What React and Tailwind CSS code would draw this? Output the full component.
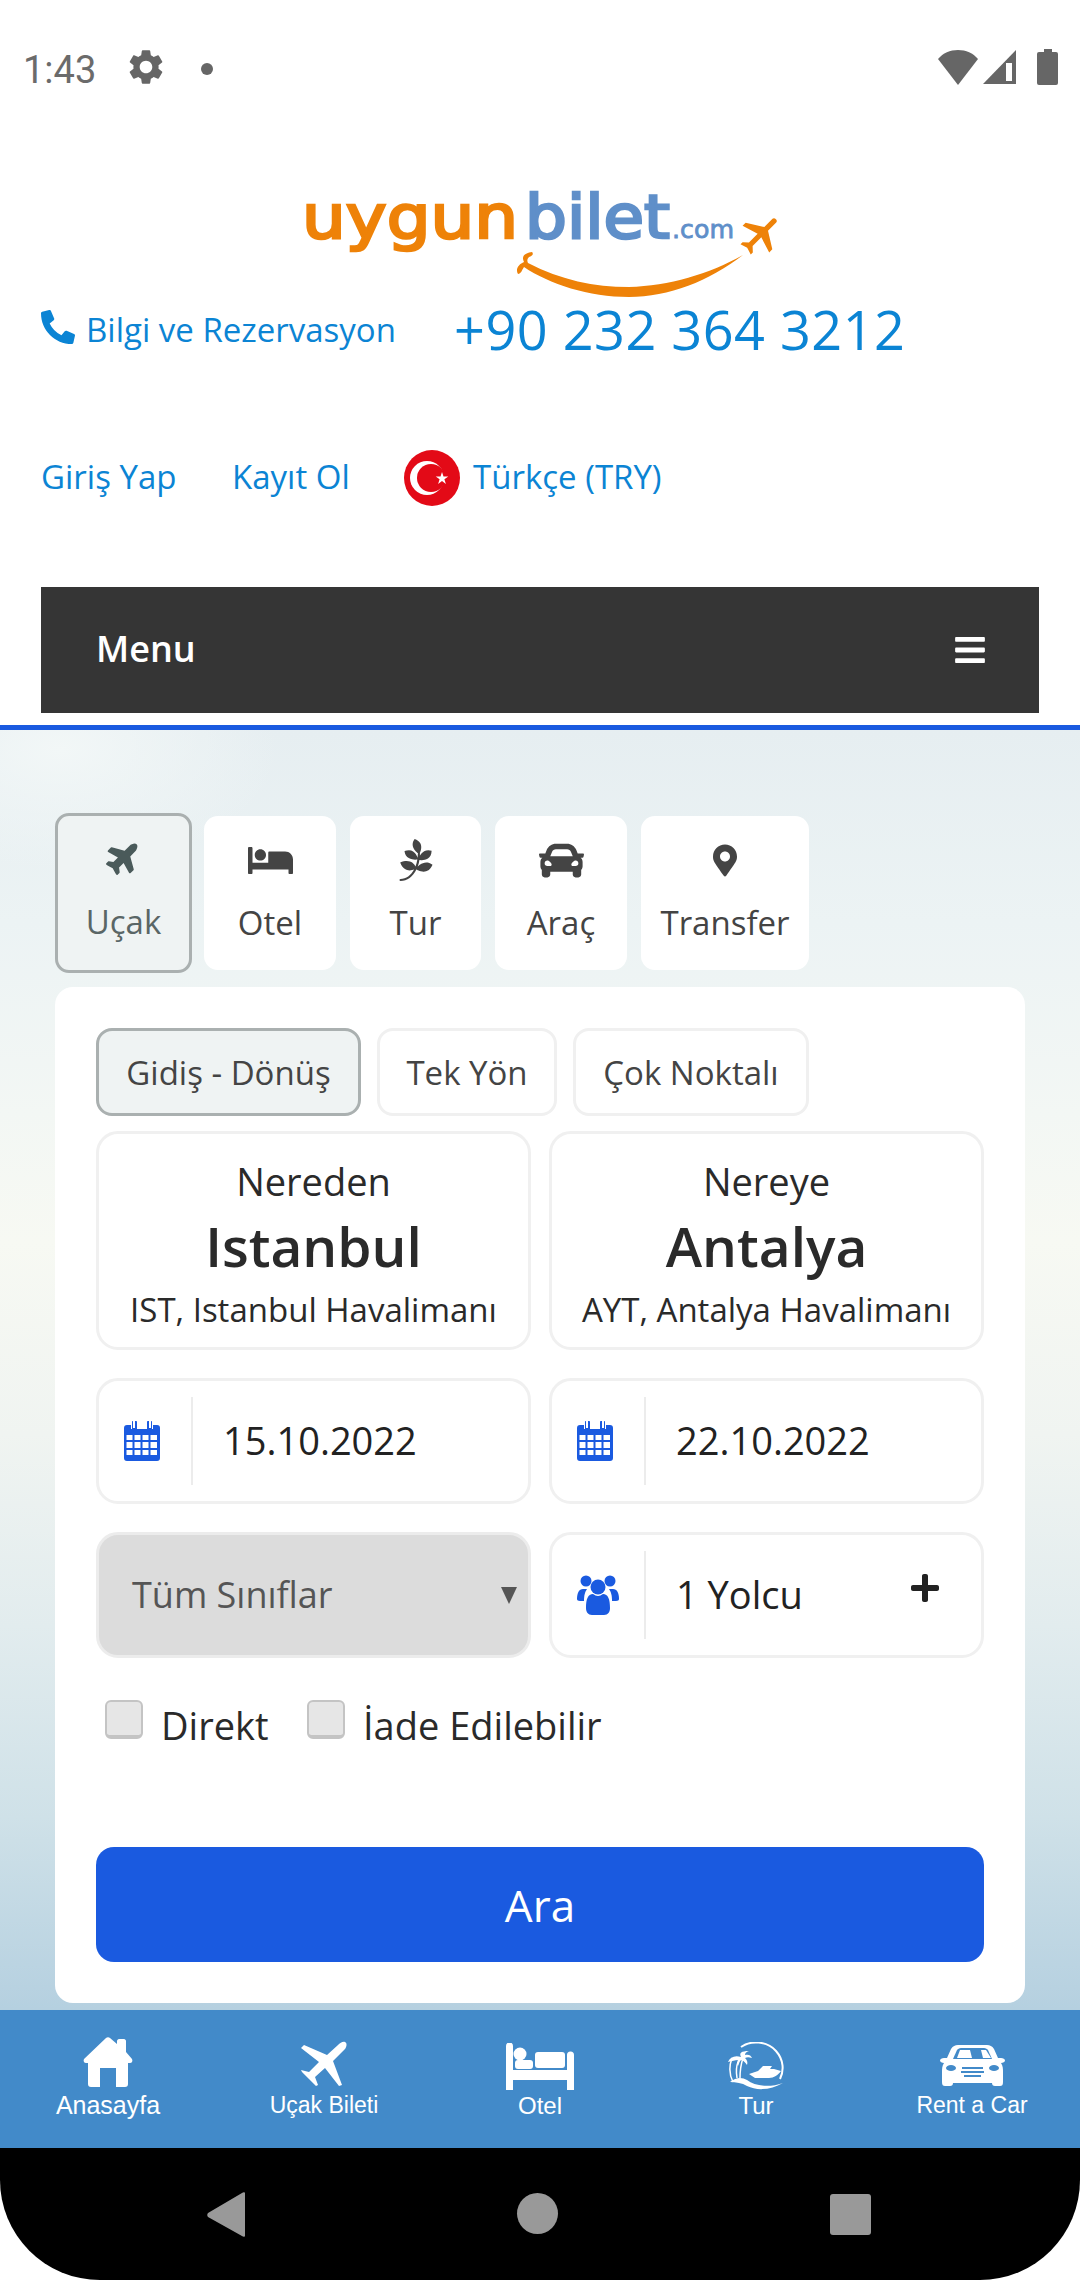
import React from 'react';
import { FaBed, FaCar, FaPagelines, FaMapMarkerAlt, FaPlane, FaPhoneAlt, FaPlus, FaBars } from 'react-icons/fa';
import { MdSettings } from 'react-icons/md';

const openSans = "font-['Open_Sans',sans-serif]";

const Logo = () => (
  <svg viewBox="0 0 480 118" className="w-[480px] h-[118px] block overflow-visible">
    <text x="1" y="54" textLength="216" lengthAdjust="spacingAndGlyphs" fill="#ee8208" stroke="#ee8208" strokeWidth="2.6" fontFamily="DejaVu Sans" fontSize="60">uygun</text>
    <text x="224" y="54" textLength="145" lengthAdjust="spacingAndGlyphs" fill="#5f8fc9" stroke="#5f8fc9" strokeWidth="2.6" fontFamily="DejaVu Sans" fontSize="60">bilet</text>
    <text x="371" y="54" textLength="62" lengthAdjust="spacingAndGlyphs" fill="#5f8fc9" stroke="#5f8fc9" strokeWidth="0.8" fontFamily="DejaVu Sans" fontSize="25">.com</text>
    <path transform="translate(-2 0)" d="M225 78C222 72 226 69 233 68C235 70 233 72 230 73C228 75 228 77 229 79C262 96 295 103 330 103C370 102 410 90 444 71C410 97 370 113 330 113C290 113 250 100 225 83C223 86 222 90 219 90C216 85 220 80 225 78Z" fill="#ee8208" />
    <g transform="translate(459 51) rotate(45) scale(1.45)" fill="#ee8208">
      <path d="M-1.800-14c0-2 3.600-2 3.600 0v8L13 1v3L1.800 0.500V9l3.200 3v2L0 12.500-5 14v-2l3.200-3V0.500L-13 4V1l11.200-7z" />
    </g>
  </svg>
);

const Wifi = () => (
  <svg viewBox="0 0 40 35" className="w-[40px] h-[35px]"><path d="M20 35 0 9C5 3 12 0 20 0s15 3 20 9z" fill="#666" /></svg>
);

const Signal = () => (
  <svg viewBox="0 0 33 34" className="w-[33px] h-[34px]"><path d="M33 0v34H0z" fill="#666" /><path d="M23 13h6v18h-6z" fill="#fff" /></svg>
);

const StatusBar = () => (
  <div className="h-[134px] flex items-start justify-between pl-[23px] pr-[22px] pt-[49px]">
    <div className="flex items-center h-[36px]">
      <span className="font-['Roboto',sans-serif] text-[38px] leading-none text-[#6b6b6b] w-[104px] mt-[5px]">1:43</span>
      <MdSettings className="w-[42px] h-[42px] -ml-[2px] text-[#666]" />
      <span className="w-[12px] h-[12px] rounded-full bg-[#666] ml-[34px] mt-[3px]"></span>
    </div>
    <div className="flex items-center h-[36px]">
      <Wifi />
      <div className="ml-[5px]"><Signal /></div>
      <div className="ml-[21px] w-[21px] h-[36px] flex flex-col items-center">
        <div className="w-[8px] h-[3px] bg-[#666]"></div>
        <div className="w-[21px] h-[33px] bg-[#666] rounded-[2px]"></div>
      </div>
    </div>
  </div>
);

const Header = () => (
  <div className={`${openSans} text-[#0b84d4]`}>
    <div className="flex justify-center pl-[1px] pt-[50px]"><Logo /></div>
    <div className="flex items-center h-[66px] pl-[41px] -mt-[6px]">
      <FaPhoneAlt className="w-[34px] h-[36px] -scale-x-100 rotate-90 -mt-[5px]" />
      <span className="text-[33px] leading-none ml-[11px] w-[368px]">Bilgi ve Rezervasyon</span>
      <span className="text-[54px] leading-none tracking-[0.5px]">+90 232 364 3212</span>
    </div>
    <div className="flex items-center h-[58px] pl-[41px] mt-[85px] text-[33px] leading-none">
      <span className="w-[191px]">Giriş Yap</span>
      <span className="w-[172px]">Kayıt Ol</span>
      <svg viewBox="0 0 56 56" className="w-[56px] h-[56px] mt-[4px]">
        <circle cx="28" cy="28" r="28" fill="#e30a17" />
        <circle cx="23" cy="28" r="17" fill="#fff" />
        <circle cx="27" cy="28" r="14" fill="#e30a17" />
        <path transform="translate(3 0)" d="M35 22l1.500 4.500h4.800l-3.900 2.800 1.500 4.600-3.900-2.800-3.900 2.800 1.500-4.600-3.900-2.800h4.800z" fill="#fff" />
      </svg>
      <span className="ml-[13px]">Türkçe (TRY)</span>
    </div>
    <div className="mx-[41px] mt-[82px] h-[126px] bg-[#353535] flex items-center justify-between pl-[55px] pr-[52px] text-white">
      <span className="text-[36px] leading-none font-semibold -mt-[2px]">Menu</span>
      <FaBars className="w-[34px] h-[34px]" />
    </div>
    <div className="h-[12px]"></div>
    <div className="h-[5px] bg-[#1a5ae0]"></div>
  </div>
);

const tabs = [
  { label: 'Otel', icon: <FaBed className="w-[45px] h-[45px]" />, width: 'w-[132px]' },
  { label: 'Tur', icon: <FaPagelines className="w-[40px] h-[44px]" />, width: 'w-[131px]' },
  { label: 'Araç', icon: <FaCar className="w-[45px] h-[45px]" />, width: 'w-[132px]' },
  { label: 'Transfer', icon: <FaMapMarkerAlt className="w-[24px] h-[33px]" />, width: 'w-[168px]' },
];

const Tabs = () => (
  <div className="flex items-center h-[160px] pl-[55px] gap-[14px]">
    <div className="w-[137px] h-[160px] mr-[-2px] rounded-[14px] border-[3px] border-[#aab0b0] bg-[#eff3f3] text-[#5a6666] flex flex-col items-center">
      <FaPlane className="w-[36px] h-[36px] mt-[23px] -rotate-45 text-[#4a5a5a]" />
      <span className="text-[33px] leading-none mt-[30px]">Uçak</span>
    </div>
    {tabs.map((tab) => (
      <div key={tab.label} className={`${tab.width} h-[154px] rounded-[14px] bg-white text-[#444] flex flex-col items-center`}>
        <div className="h-[46px] mt-[21px] flex items-center justify-center">{tab.icon}</div>
        <span className="text-[33px] leading-none mt-[23px]">{tab.label}</span>
      </div>
    ))}
  </div>
);

const TripButton = ({ children, active, width }) => (
  <div className={`${width} h-[88px] rounded-[16px] flex items-center justify-center text-[33px] leading-none text-[#444] ${active ? 'border-[3px] border-[#aab0b0] bg-[#eff3f3]' : 'border-[3px] border-[#f0f0f0] bg-white'}`}>
    {children}
  </div>
);

const Place = ({ title, city, airport }) => (
  <div className="h-[219px] rounded-[22px] border-[3px] border-[#f0f0f0] flex flex-col items-center text-[#2a2a2a]">
    <span className="text-[38px] leading-none mt-[28px]">{title}</span>
    <span className="text-[55px] leading-none font-semibold mt-[18px]">{city}</span>
    <span className="text-[33px] leading-none mt-[20px] whitespace-nowrap">{airport}</span>
  </div>
);

const CalendarIcon = () => (
  <svg viewBox="0 0 36 40" className="w-[36px] h-[40px] -ml-[8px]" fill="#1a5ae0">
    <path fillRule="evenodd" d="M3 4h4v4h1V1.500a2 2 0 0 1 5 0V8h10V1.500a2 2 0 0 1 5 0V8h1V4h4a3 3 0 0 1 3 3v30a3 3 0 0 1-3 3H3a3 3 0 0 1-3-3V7a3 3 0 0 1 3-3zM2.500 14v5h6v-5zm8 0v5h6v-5zm8 0v5h6v-5zm8 0v5h6.500v-5zM2.500 21v6h6v-6zm8 0v6h6v-6zm8 0v6h6v-6zm8 0v6h6.500v-6zM2.500 29v5h6v-5zm8 0v5h6v-5zm8 0v5h6v-5zm8 0v5h6.500v-5z" />
    <rect x="9" y="0" width="2" height="7" fill="#fff" />
    <rect x="25" y="0" width="2" height="7" fill="#fff" />
  </svg>
);

const UsersIcon = () => (
  <svg viewBox="0 0 42 40" className="w-[42px] h-[40px] -ml-[3px]" fill="#1a5ae0">
    <circle cx="9" cy="6" r="5.500" />
    <circle cx="33" cy="6" r="5.500" />
    <path d="M0 24c0-6 2-10 6-10h4c-2 3-3 6-3 12H3c-2 0-3-1-3-2zM42 24c0-6-2-10-6-10h-4c2 3 3 6 3 12h4c2 0 3-1 3-2z" />
    <circle cx="21" cy="12" r="7.500" />
    <path d="M9 33c0-9 2-14 7-14 2 1 3 2 5 2s3-1 5-2c5 0 7 5 7 14 0 4-2 7-6 7H15c-4 0-6-3-6-7z" />
  </svg>
);

const InputBox = ({ icon, children, action }) => (
  <div className="h-[126px] rounded-[22px] border-[3px] border-[#f0f0f0] flex items-center relative">
    <div className="w-[94px] h-[88px] border-r-[2px] border-[#ececec] flex items-center justify-center pl-[2px]">{icon}</div>
    <span className="text-[38px] leading-none text-[#222] pl-[30px] -mt-[3px]">{children}</span>
    {action}
  </div>
);

const Check = ({ label, width }) => (
  <div className={`${width} flex items-start`}>
    <div className="w-[38px] h-[39px] mt-[3px] rounded-[6px] bg-[#e6e6e6] border-[2px] border-[#c4c4c4] border-b-[4px] shrink-0"></div>
    <span className="text-[38px] leading-none text-[#2a2a2a] ml-[18px] mt-[9px] whitespace-nowrap">{label}</span>
  </div>
);

const BookingCard = () => (
  <div className="mx-[55px] mt-[14px] h-[1016px] rounded-[18px] bg-white px-[41px] pt-[41px]">
    <div className="flex gap-[16px]">
      <TripButton active width="w-[265px]">Gidiş - Dönüş</TripButton>
      <TripButton width="w-[180px]">Tek Yön</TripButton>
      <TripButton width="w-[236px]">Çok Noktalı</TripButton>
    </div>
    <div className="grid grid-cols-2 gap-x-[18px] mt-[15px]">
      <Place title="Nereden" city="Istanbul" airport="IST, Istanbul Havalimanı" />
      <Place title="Nereye" city="Antalya" airport="AYT, Antalya Havalimanı" />
    </div>
    <div className="grid grid-cols-2 gap-x-[18px] mt-[28px]">
      <InputBox icon={<CalendarIcon />}>15.10.2022</InputBox>
      <InputBox icon={<CalendarIcon />}>22.10.2022</InputBox>
    </div>
    <div className="grid grid-cols-2 gap-x-[18px] mt-[28px]">
      <div className="h-[126px] rounded-[22px] border-[3px] border-[#ececec] bg-[#dcdcdc] flex items-center justify-between pl-[33px] pr-[11px] text-[#555]">
        <span className="text-[36px] leading-none">Tüm Sınıflar</span>
        <span className="w-0 h-0 border-l-[8px] border-r-[8px] border-t-[17px] border-l-transparent border-r-transparent border-t-[#555]"></span>
      </div>
      <InputBox icon={<UsersIcon />} action={<FaPlus className="absolute right-[40px] top-[37px] w-[32px] h-[32px] text-[#222]" />}>1 Yolcu</InputBox>
    </div>
    <div className="flex mt-[39px] pl-[9px] h-[60px]">
      <Check label="Direkt" width="w-[202px]" />
      <Check label="İade Edilebilir" width="w-[300px]" />
    </div>
    <div className="h-[115px] mt-[90px] rounded-[18px] bg-[#1a5ae0] flex items-center justify-center text-white text-[44px] leading-none">Ara</div>
  </div>
);

const HomeIcon = () => (
  <svg viewBox="0 0 50 50" className="w-[50px] h-[50px] mb-[4px]" fill="#fff">
    <path d="M23 1c1-1 3-1 4 0l7 6V4c0-1 1-2 2-2h5c1 0 2 1 2 2v11l6 7c1 2 0 4-2 4h-2v21c0 2-1 3-3 3H33V31H17v19H8c-2 0-3-1-3-3V26H3c-2 0-3-2-2-4z" />
  </svg>
);

const PlaneIcon = () => (
  <svg viewBox="0 0 46 46" className="w-[46px] h-[46px] mb-[4px]" fill="#fff">
    <path d="M44 1C46 2 46 5 44 8L32 20 41 44 38 45 24 27 14 36 17 44 15 45 8 38 1 31 0 29 8 31 18 21 0 7 3 4 26 14 37 4C39 2 42 0 44 1Z" />
  </svg>
);

const BedIcon = () => (
  <svg viewBox="0 0 68 47" className="w-[68px] h-[47px] mb-[1px]" fill="#fff">
    <path d="M0 3a3.500 3.500 0 0 1 7 0V27H61V12a3.500 3.500 0 0 1 7 0V47H61V37H7V47H0Z" />
    <circle cx="14" cy="11" r="6.500" />
    <rect x="9" y="17" width="18" height="9" rx="3" />
    <rect x="29" y="9" width="30" height="16" rx="3" />
  </svg>
);

const TourIcon = () => (
  <svg viewBox="0 0 58 48" className="w-[58px] h-[48px] mb-[1px]" fill="none" stroke="#fff">
    <path d="M14 5C24-2 40-1 49 9c8 9 8 20 4 28" strokeWidth="2" />
    <path d="M5 16C2 24 2 32 6 40" strokeWidth="1.500" />
    <path d="M13 36c0-7 1-14 3-20M10 36c-1-6-1-11 1-16" strokeWidth="1.500" />
    <path d="M1 20c2-5 7-7 13-5-2-4 0-6 8-6-3 1-4 2-4 4 3-1 6 0 7 3-3-1-5-1-7 0 2 2 3 4 2 7-2-3-4-5-6-5-2 2-2 4-3 6-1-3-1-5 0-6-3 0-6 1-10 2z" fill="#fff" stroke="none" />
    <path d="M22 32l9-3 5-5h9l-2 3h4l7 2c-3 4-7 7-12 7H28z" fill="#fff" stroke="none" />
    <path d="M3 40c6-5 12-5 17-2 8 6 22 8 36 3-12 7-26 8-36 3-5-3-11-4-17-4z" fill="#fff" stroke="none" />
  </svg>
);

const CarIcon = () => (
  <svg viewBox="0 0 65 41" className="w-[65px] h-[41px] mb-[5px]">
    <path d="M11 4c2-3 4-4 7-4h29c3 0 5 1 7 4l4 9h3c2 0 4 1 4 2.500S63 18 61 18c2 3 2 6 2 9v10c0 3-1 4-3 4h-5c-2 0-3-1-3-3H13c0 2-1 3-3 3H5c-2 0-3-1-3-4V27c0-3 0-6 2-9-2 0-4-1-4-2.500S2 13 4 13h3z" fill="#fff" />
    <path d="M13 14l4-9c1-1 2-2 4-2h23c2 0 3 1 4 2l4 9z" fill="#428ac9" />
    <path d="M20 5h10l2 8H17zM41 5h5l5 8H43z" fill="#fff" />
    <path d="M22 22h21v2H22zM21 26h23v2H21zM24 30h17v2H24z" fill="#428ac9" />
    <ellipse cx="11" cy="23" rx="5" ry="3" fill="#428ac9" />
    <ellipse cx="54" cy="23" rx="5" ry="3" fill="#428ac9" />
  </svg>
);

const navItems = [
  { label: 'Anasayfa', icon: <HomeIcon />, size: 'text-[25px]' },
  { label: 'Uçak Bileti', icon: <PlaneIcon />, size: 'text-[23px]' },
  { label: 'Otel', icon: <BedIcon />, size: 'text-[24px]' },
  { label: 'Tur', icon: <TourIcon />, size: 'text-[24px]' },
  { label: 'Rent a Car', icon: <CarIcon />, size: 'text-[23px]' },
];

const BottomNav = () => (
  <div className="h-[138px] bg-[#428ac9] grid grid-cols-5 text-white">
    {navItems.map((item) => (
      <div key={item.label} className="flex flex-col items-center">
        <div className="h-[54px] mt-[27px] flex items-end justify-center">{item.icon}</div>
        <div className="h-[25px] mt-[2px] flex items-center">
          <span className={`font-['Liberation_Sans',sans-serif] ${item.size} leading-none whitespace-nowrap`}>{item.label}</span>
        </div>
      </div>
    ))}
  </div>
);

const AndroidNav = () => (
  <div className="h-[132px] bg-black rounded-b-[100px] flex items-start justify-between pl-[207px] pr-[209px] pt-[44px]">
    <svg viewBox="0 0 38 45" className="w-[38px] h-[45px]"><path d="M38 1v43c0 1-2 1-3 0L1 25c-1-1-1-3 0-4L35 1c1-1 3-1 3 0z" fill="#999" /></svg>
    <div className="w-[41px] h-[41px] rounded-full bg-[#999] mt-[1px]"></div>
    <div className="w-[41px] h-[41px] rounded-[3px] bg-[#999] mt-[2px]"></div>
  </div>
);

export default function App() {
  return (
    <div className={`w-[1080px] h-[2280px] overflow-hidden bg-white ${openSans}`}>
      <StatusBar />
      <Header />
      <main className="h-[1280px] pt-[83px] bg-[radial-gradient(ellipse_220px_120px_at_60px_20px,#f2f7f7,transparent),linear-gradient(180deg,#e6eef1_0%,#ecf3f4_15%,#f3f7f4_30%,#f7f9f3_40%,#f0f4f1_55%,#e2ecee_70%,#cfe1e8_85%,#b5d0e0_100%)]">
        <Tabs />
        <BookingCard />
      </main>
      <BottomNav />
      <AndroidNav />
    </div>
  );
}
